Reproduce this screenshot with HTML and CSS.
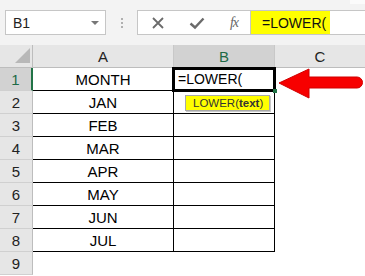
FILE: index.html
```html
<!DOCTYPE html>
<html>
<head>
<meta charset="utf-8">
<link rel="stylesheet" href="styles.css">
</head>
<body>
<div class="app">
  <div class="toolbar">
    <div class="topstrip"><span class="strip-light"></span></div>
    <div class="bar">
      <div class="namebox">
        <span class="name">B1</span>
        <span class="dd"></span>
      </div>
      <div class="dots"><i></i><i></i><i></i></div>
      <div class="fbtns">
        <svg class="ic" width="14" height="14" viewBox="0 0 14 14"><path d="M2 2 L12 12 M12 2 L2 12" stroke="#6b6b6b" stroke-width="1.8" fill="none"/></svg>
        <svg class="ic" width="16" height="14" viewBox="0 0 16 14"><path d="M1.5 7.5 L6 11.5 L14.5 2.5" stroke="#6b6b6b" stroke-width="2.4" fill="none"/></svg>
        <span class="fx">fx</span>
      </div>
      <div class="finput"><span class="ftext">=LOWER(</span></div>
    </div>
  </div>
  <div class="sheet">
    <div class="grid">
      <div class="corner"><span class="tri"></span></div>
      <div class="ch">A</div>
      <div class="ch sel">B</div>
      <div class="ch last">C</div>

      <div class="rh sel">1</div><div class="c a">MONTH</div><div class="c b"><span class="entry">=LOWER(</span></div><div class="c e"></div>
      <div class="rh">2</div><div class="c a">JAN</div><div class="c b"></div><div class="c e"></div>
      <div class="rh">3</div><div class="c a">FEB</div><div class="c b"></div><div class="c e"></div>
      <div class="rh">4</div><div class="c a">MAR</div><div class="c b"></div><div class="c e"></div>
      <div class="rh">5</div><div class="c a">APR</div><div class="c b"></div><div class="c e"></div>
      <div class="rh">6</div><div class="c a">MAY</div><div class="c b"></div><div class="c e"></div>
      <div class="rh">7</div><div class="c a">JUN</div><div class="c b"></div><div class="c e"></div>
      <div class="rh">8</div><div class="c a">JUL</div><div class="c b"></div><div class="c e"></div>
      <div class="rh">9</div><div class="c n"></div><div class="c n"></div><div class="c e"></div>
    </div>
    <div class="active"><span class="handle"></span></div>
    <div class="tip">LOWER(<b>text</b>)</div>
    <svg class="arrow" width="87" height="36" viewBox="0 0 87 36">
      <path d="M1 17 L31 3 L31 11 L79 11 A5.5 5.5 0 0 1 79 22 L31 22 L31 32 Z" fill="#f70000" stroke="#d00000" stroke-width="1"/>
    </svg>
  </div>
</div>
</body>
</html>
```
FILE: styles.css
```css
* { box-sizing: border-box; }
html, body { margin: 0; padding: 0; background: #ffffff; }
body { font-family: "Liberation Sans", Arial, sans-serif; color: #000; }
.app { width: 365px; height: 276px; overflow: hidden; }

.toolbar { height: 45px; background: #f3f3f3; display: flex; flex-direction: column; }
.topstrip { height: 4px; display: flex; justify-content: flex-end; }
.strip-light { width: 15px; height: 4px; background: #fbfbfb; }
.bar { display: flex; align-items: stretch; height: 25px; margin-top: 6px; }

.namebox { margin-left: 5px; width: 101px; background: #fff; border: 1px solid #c6c6c6; display: flex; align-items: center; justify-content: space-between; padding: 0 6px 0 7px; }
.name { font-size: 14px; color: #222; }
.dd { width: 0; height: 0; border-left: 4px solid transparent; border-right: 4px solid transparent; border-top: 4px solid #777; }

.dots { width: 31px; display: flex; flex-direction: column; align-items: center; justify-content: center; gap: 2px; }
.dots i { display: block; width: 2px; height: 2px; background: #b0b0b0; }

.fbtns { width: 113px; background: #fff; border: 1px solid #c6c6c6; border-right: none; display: flex; align-items: center; justify-content: space-between; padding: 0 12px 0 13px; }
.fx { font-family: "Liberation Serif", serif; font-style: italic; font-size: 14px; color: #666; letter-spacing: -1px; }

.finput { flex: 1; background: #fff; border: 1px solid #c6c6c6; border-right: none; display: flex; align-items: stretch; padding: 0; }
.ftext { width: 79px; background: #ffff00; font-size: 14px; display: flex; align-items: center; padding-left: 11px; color: #111; }

.sheet { position: relative; height: 231px; }
.grid { display: grid; grid-template-columns: 33px 141px 101px 1fr; grid-auto-rows: 23px; }

.corner { background: #e6e6e6; border-right: 1px solid #bdbdbd; border-bottom: 1px solid #bdbdbd; position: relative; display: flex; align-items: flex-end; justify-content: flex-end; padding: 0 2px 4px 0; }
.tri { width: 0; height: 0; border-left: 15px solid transparent; border-bottom: 15px solid #b8b8b8; }

.ch { background: #e6e6e6; border-right: 1px solid #c8c8c8; border-bottom: 1px solid #bdbdbd; display: flex; align-items: center; justify-content: center; font-size: 15px; color: #222; }
.ch.sel { background: #d2d2d2; color: #1d6a47; }
.ch.last { border-right: none; }

.rh { background: #e6e6e6; border-right: 1px solid #bdbdbd; border-bottom: 1px solid #d0d0d0; display: flex; align-items: center; justify-content: center; font-size: 15px; color: #222; }
.rh.sel { background: #d2d2d2; color: #1d6a47; border-right: 2px solid #217346; }

.c { background: #fff; display: flex; align-items: center; font-size: 15px; }
.a { justify-content: center; border-right: 1px solid #000; border-bottom: 1px solid #000; }
.b { border-right: 1px solid #000; border-bottom: 1px solid #000; }
.entry { padding-left: 4px; font-size: 14px; }

.active { position: absolute; left: 172px; top: 22px; width: 104px; height: 25px; border: 3px solid #000; }
.handle { position: absolute; right: -4px; bottom: -4px; width: 4px; height: 4px; background: #217346; }

.tip { position: absolute; left: 185px; top: 50px; width: 85px; height: 16px; background: #ffff00; border: 1px solid #a8a8a8; box-shadow: 1px 1px 0 #c8c8c8; font-size: 11.5px; color: #333; display: flex; align-items: center; padding-left: 7px; white-space: nowrap; }
.tip b { font-weight: bold; }

.arrow { position: absolute; left: 278px; top: 21px; }
```
